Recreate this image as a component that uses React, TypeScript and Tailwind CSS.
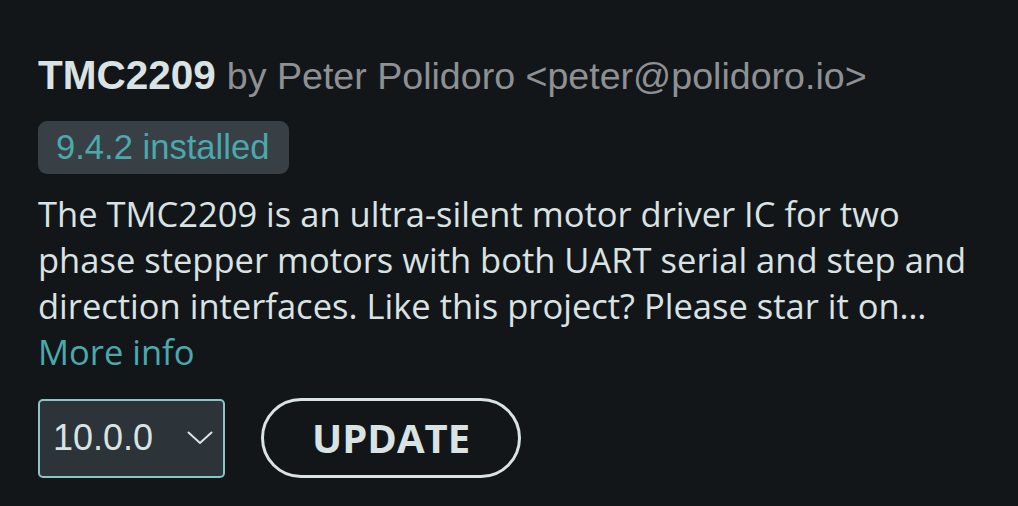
import React from "react";

export default function App() {
  return (
    <div className="w-[1018px] h-[506px] bg-[#131619] overflow-hidden">
      <div className="pl-[38px] pr-[30px] pt-[52px]">
        <div className="flex items-baseline leading-[46px] whitespace-nowrap font-['Liberation_Sans',Arial,sans-serif]">
          <span className="text-[40.5px] font-bold text-[#dae3e3]">TMC2209</span>
          <span className="ml-[11px] text-[37.6px] text-[#8d9194]">by Peter Polidoro &lt;peter@polidoro.io&gt;</span>
        </div>
        <div className="mt-[22px] flex">
          <div className="h-[53px] flex items-center pl-[18px] pr-[20px] rounded-[9px] bg-[#383f45] text-[34.6px] text-[#4aa9ad] font-['Liberation_Sans',Arial,sans-serif] leading-none">
            9.4.2 installed
          </div>
        </div>
        <div className="mt-[17px] font-['Open_Sans',sans-serif] text-[34.5px] leading-[46px]">
          <p className="text-[#dae3e3]">
            The TMC2209 is an ultra-silent motor driver IC for two phase stepper motors with both UART serial and step and direction interfaces. Like this project? Please star it on…
          </p>
          <div className="text-[#4aa9ad]">More info</div>
        </div>
        <div className="mt-[23px] flex items-center gap-[36px]">
          <div className="w-[187px] h-[79px] rounded-[5px] border-2 border-[#8cc5c7] bg-[#2c3339] flex items-center justify-between pl-[13px] pr-[10px]">
            <span className="text-[36px] text-[#dae3e3] font-['Liberation_Sans',Arial,sans-serif] leading-none">10.0.0</span>
            <svg width="26" height="14" viewBox="0 0 26 14" fill="none">
              <path d="M1.5 1.5 L13 12 L24.5 1.5" stroke="#dae3e3" strokeWidth="2" strokeLinecap="round" strokeLinejoin="round" />
            </svg>
          </div>
          <div className="w-[260px] h-[80px] rounded-full border-[3px] border-[#dae3e3] flex items-center justify-center">
            <span className="font-['Open_Sans',sans-serif] font-bold text-[40px] text-[#dae3e3] leading-none">UPDATE</span>
          </div>
        </div>
      </div>
    </div>
  );
}
